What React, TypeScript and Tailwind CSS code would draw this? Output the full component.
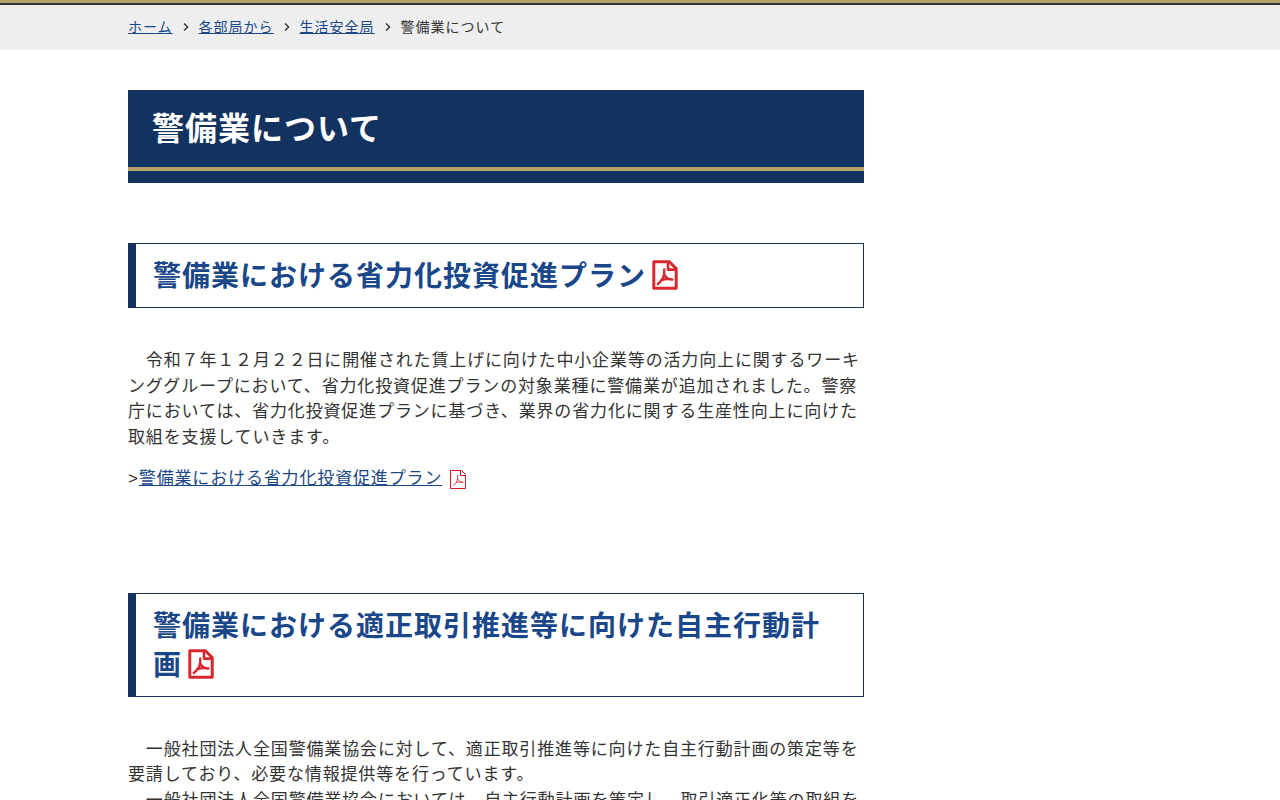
import { ReactNode } from "react";

const breadcrumbs = ["ホーム", "各部局から", "生活安全局"];

const PdfIcon = ({ bold = false }: { bold?: boolean }) => {
  if (bold) {
    return (
      <svg
        viewBox="0 0 26 30"
        className="ml-[6px] inline-block h-[30px] w-[26px] align-[-4px]"
        fill="none"
        stroke="#d7282f"
        strokeWidth="3"
        strokeLinejoin="round"
        strokeLinecap="round"
        aria-hidden="true"
      >
        <path d="M1.8 1.8h15.6l6.8 6.8v19.600H1.8z" />
        <path d="M16 2v7.600h8" strokeWidth="2.600" />
        <path
          d="M12.200 9.500c.4 4 .2 6.400-2 9.800-1.300 1.900-3 3.600-4.400 4.700M12.300 14.500c1.200 2.900 3.800 4.800 8 5M9 20.400c3.200-1.400 7-2 11.400-.9"
          strokeWidth="2.400"
        />
      </svg>
    );
  }
  return (
    <svg
      viewBox="0 0 16 19"
      className="ml-2 inline-block h-[19px] w-4 align-[-5px]"
      fill="none"
      stroke="#d7191f"
      aria-hidden="true"
    >
      <path d="M.5.5h11l4 4v14H.5z" />
      <path d="M10.500.5v5h5" />
      <path
        d="M7.500 5c.5 3 .1 5.200-1.200 7.200-.9 1.500-2 2.700-3.200 3.500M7.500 8.500c.9 2.300 2.600 3.800 5.700 4M5.800 12.900c2.200-1 4.800-1.300 7.400-.4"
        strokeWidth=".8"
      />
    </svg>
  );
};

const Chevron = () => (
  <svg
    viewBox="0 0 6 10"
    className="mx-[10px] h-[10px] w-[6px]"
    fill="none"
    stroke="#333"
    strokeWidth="1.400"
    aria-hidden="true"
  >
    <path d="M1 1.500l3.600 3.500L1 8.500" />
  </svg>
);

const SectionHeading = ({ children }: { children: ReactNode }) => (
  <h2 className="border border-l-8 border-[#12335f] px-[17px] pt-[13px] pb-[11px] text-[28px] leading-[39px] font-bold tracking-[1px]">
    <a href="#" className="text-[#1a4789]">
      {children}
      <PdfIcon bold />
    </a>
  </h2>
);

const App = () => {
  return (
    <div
      lang="ja"
      className="min-h-screen bg-white font-['Liberation_Sans','Noto_Sans_CJK_JP',sans-serif] text-[17px] leading-normal tracking-wider text-[#333]"
    >
      <header className="border-t-3 border-[#b3a369]">
        <div className="border-t-2 border-[#333] bg-[#eee]">
          <nav aria-label="breadcrumb" className="mx-auto max-w-5xl">
            <ol className="flex items-center pt-3 pb-[13px] text-sm tracking-[1px]">
              {breadcrumbs.map((label) => (
                <li key={label} className="flex items-center">
                  <a href="#" className="text-[#1a4789] underline">
                    {label}
                  </a>
                  <Chevron />
                </li>
              ))}
              <li>警備業について</li>
            </ol>
          </nav>
        </div>
      </header>

      <div className="mx-auto max-w-5xl pt-10">
        <main className="max-w-[736px]">
          <div className="bg-[#12335f] pb-3">
            <h1 className="border-b-4 border-[#b3a369] px-6 pt-[15px] pb-[14px] text-[32px] leading-[48px] font-bold tracking-[1px] text-white">
              警備業について
            </h1>
          </div>

          <section className="mt-15">
            <SectionHeading>警備業における省力化投資促進プラン</SectionHeading>
            <p className="mt-10">
              {"\u3000令和７年１２月２２日に開催された賃上げに向けた中小企業等の活力向上に関するワーキンググループにおいて、省力化投資促進プランの対象業種に警備業が追加されました。警察庁においては、省力化投資促進プランに基づき、業界の省力化に関する生産性向上に向けた取組を支援していきます。"}
            </p>
            <p className="mt-4">
              &gt;
              <a href="#" className="text-[#1a4789]">
                <span className="underline">警備業における省力化投資促進プラン</span>
                <PdfIcon />
              </a>
            </p>
          </section>

          <section className="mt-[101px]">
            <SectionHeading>警備業における適正取引推進等に向けた自主行動計画</SectionHeading>
            <p className="mt-10">
              {"\u3000一般社団法人全国警備業協会に対して、適正取引推進等に向けた自主行動計画の策定等を要請しており、必要な情報提供等を行っています。"}
              <br />
              {"\u3000一般社団法人全国警備業協会においては、自主行動計画を策定し、取引適正化等の取組を"}
            </p>
          </section>
        </main>
      </div>
    </div>
  );
};

export default App;
